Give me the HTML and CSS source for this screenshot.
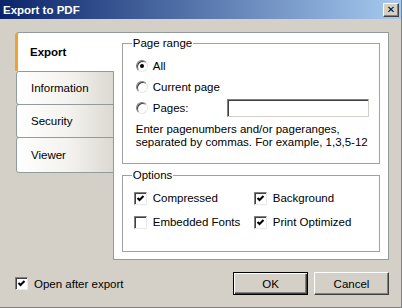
FILE: index.html
```html
<!DOCTYPE html>
<html lang="en">
<head>
    <meta charset="UTF-8">
    <meta name="viewport" content="width=device-width, initial-scale=1.0">
    <title>Export to PDF</title>
    <link rel="stylesheet" href="styles.css">
</head>
<body>

    <div class="window">
        <!-- Title bar -->
        <div class="titlebar">
            <span class="title">Export to PDF</span>
            <button class="close-btn">&#x2715;</button>
        </div>

        <div class="content">
            <!-- Tabs -->
            <div class="tabs">
                <div class="tab active">Export</div>
                <div class="tab">Information</div>
                <div class="tab">Security</div>
                <div class="tab">Viewer</div>
                <div class="tab-filler"></div>
            </div>

            <!-- Tab page -->
            <div class="panel">
                <fieldset class="group page-range">
                    <legend>Page range</legend>
                    <div class="radio-row"><span class="radio checked"></span>All</div>
                    <div class="radio-row"><span class="radio"></span>Current page</div>
                    <div class="radio-row">
                        <span class="radio"></span><span class="pages-label">Pages:</span>
                        <span class="text-input"></span>
                    </div>
                    <p class="hint">Enter pagenumbers and/or pageranges,<br>separated by commas. For example, 1,3,5-12</p>
                </fieldset>

                <fieldset class="group options">
                    <legend>Options</legend>
                    <div class="options-grid">
                        <div class="check-row"><span class="checkbox checked"></span>Compressed</div>
                        <div class="check-row"><span class="checkbox checked"></span>Background</div>
                        <div class="check-row"><span class="checkbox"></span>Embedded Fonts</div>
                        <div class="check-row"><span class="checkbox checked"></span>Print Optimized</div>
                    </div>
                </fieldset>
            </div>
        </div>

        <!-- Footer -->
        <div class="footer">
            <div class="check-row open-after"><span class="checkbox checked"></span>Open after export</div>
            <div class="buttons">
                <button class="btn default">OK</button>
                <button class="btn">Cancel</button>
            </div>
        </div>
    </div>

</body>
</html>
```

FILE: styles.css
```css
body {
    margin: 0;
    padding: 0;
    font-family: 'Liberation Sans', Arial, sans-serif;
    font-size: 11.5px;
    color: #000;
    background-color: #d4d0c8;
}

.window {
    width: 402px;
    height: 308px;
    box-sizing: border-box;
    background-color: #d4d0c8;
    border-bottom: 1px solid #808080;
    border-right: 1px solid #808080;
    overflow: hidden;
}

/* Title bar */
.titlebar {
    height: 19px;
    display: flex;
    align-items: center;
    justify-content: space-between;
    padding: 0 2px 0 3px;
    background: linear-gradient(to right, #0a246a, #a6caf0);
}

.title {
    color: #fff;
    font-weight: bold;
    font-size: 11.5px;
}

.close-btn {
    width: 16px;
    height: 14px;
    padding: 0;
    margin: 0;
    font-family: 'DejaVu Sans', sans-serif;
    font-size: 10px;
    font-weight: bold;
    line-height: 12px;
    color: #000;
    background-color: #d4d0c8;
    border: 1px solid;
    border-color: #fff #404040 #404040 #fff;
    box-shadow: inset -1px -1px #808080;
}

/* Tabs + page */
.content {
    display: flex;
    padding: 13px 12px 0 15px;
}

.tabs {
    width: 99px;
    display: flex;
    flex-direction: column;
}

.tab {
    height: 34px;
    box-sizing: border-box;
    display: flex;
    align-items: center;
    margin-left: 1px;
    margin-top: -1px;
    padding-left: 14px;
    border: 1px solid #919b9c;
    border-radius: 3px 0 0 3px;
    background: linear-gradient(to right, #ffffff, #f3f2ee 55%, #dcd9d1);
}

.tab.active {
    height: 39px;
    margin: 0;
    padding-left: 12px;
    font-weight: bold;
    background: #fff;
    border: none;
    border-top: 1px solid #919b9c;
    border-left: 3px solid #f0a22e;
    border-radius: 4px 0 0 0;
}

.tab.active + .tab {
    margin-top: 0;
}

.tab:nth-child(4) {
    height: 36px;
}

.tab-filler {
    flex: 1;
    border-right: 1px solid #919b9c;
}

.panel {
    width: 276px;
    box-sizing: border-box;
    padding: 3px 8px 7px 8px;
    background: #fff;
    border: 1px solid #919b9c;
    border-left: none;
}

.group {
    margin: 0;
    min-width: 0;
    border: 1px solid #a0a0a0;
    padding: 5px 0 14px 13px;
}

.group legend {
    padding: 0 1px;
    margin-left: -4px;
    line-height: 14px;
}

.radio-row {
    height: 21px;
    display: flex;
    align-items: center;
}

.radio {
    width: 12px;
    height: 12px;
    box-sizing: border-box;
    margin-right: 5px;
    border-radius: 50%;
    border: 1px solid;
    border-color: #808080 #e8e8e8 #e8e8e8 #808080;
    box-shadow: inset 1px 1px #404040;
    background: #fff;
    display: flex;
    align-items: center;
    justify-content: center;
}

.radio.checked::after {
    content: "";
    width: 4px;
    height: 4px;
    border-radius: 50%;
    background: #000;
}

.pages-label {
    width: 74px;
}

.text-input {
    width: 142px;
    height: 18px;
    box-sizing: border-box;
    background: #fff;
    border: 1px solid;
    border-color: #808080 #d4d0c8 #d4d0c8 #808080;
    box-shadow: inset 1px 1px #404040;
}

.hint {
    margin: 5px 0 0 0;
    line-height: 13px;
}

.options {
    margin-top: 4px;
    padding: 4px 0 17px 11px;
}

.options legend {
    margin-left: -2px;
}

.options-grid {
    display: grid;
    grid-template-columns: 120px 1fr;
}

.check-row {
    height: 24px;
    display: flex;
    align-items: center;
}

.checkbox {
    width: 13px;
    height: 13px;
    box-sizing: border-box;
    margin-right: 6px;
    background: #fff;
    border: 1px solid;
    border-color: #808080 #e8e8e8 #e8e8e8 #808080;
    box-shadow: inset 1px 1px #404040;
}

.checkbox.checked {
    background: #fff url("data:image/svg+xml,%3Csvg xmlns='http://www.w3.org/2000/svg' width='11' height='11'%3E%3Cpolyline points='2.5,5 4.5,7 8.5,3' fill='none' stroke='%23000' stroke-width='2'/%3E%3C/svg%3E") no-repeat center;
}

/* Footer */
.footer {
    display: flex;
    align-items: center;
    justify-content: space-between;
    padding: 12px 12px 0 15px;
}

.open-after {
    height: 23px;
}

.buttons {
    display: flex;
    gap: 6px;
}

.btn {
    width: 75px;
    height: 23px;
    padding: 0;
    font-family: 'Liberation Sans', Arial, sans-serif;
    font-size: 11.5px;
    color: #000;
    background: #d4d0c8;
    border: 1px solid;
    border-color: #fff #404040 #404040 #fff;
    box-shadow: inset -1px -1px #808080;
}

.btn.default {
    border: 1px solid #000;
    box-shadow: inset 1px 1px #fff, inset -1px -1px #404040, inset -2px -2px #808080;
}
```
